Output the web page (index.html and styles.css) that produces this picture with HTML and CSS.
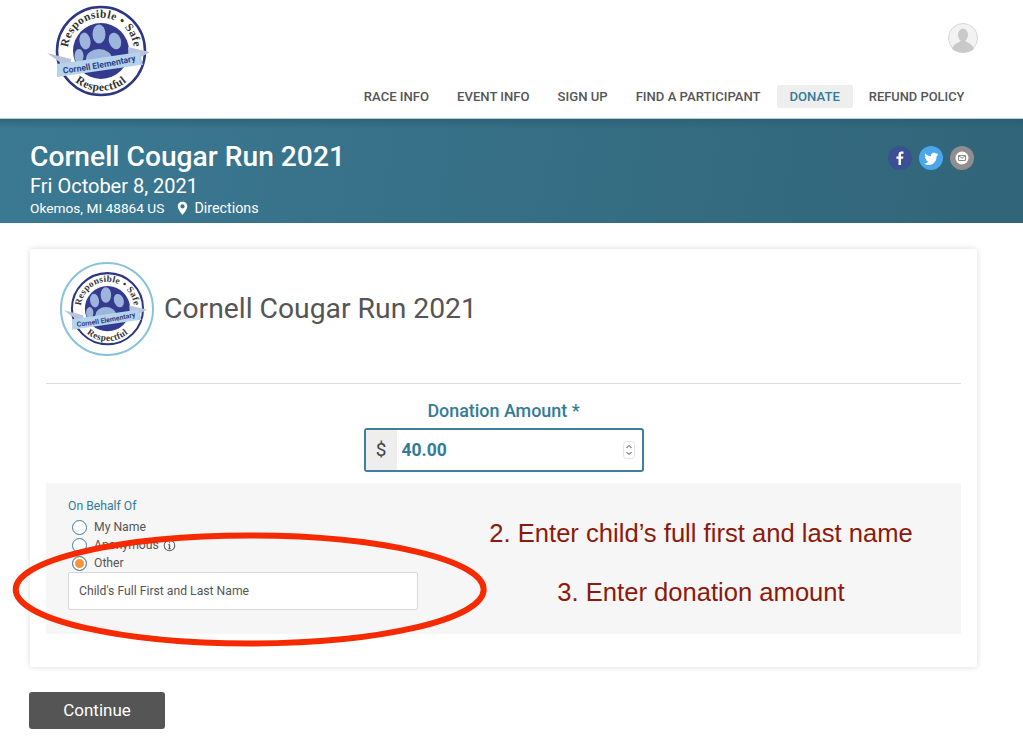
FILE: index.html
```html
<!DOCTYPE html>
<html lang="en">
<head>
    <meta charset="UTF-8">
    <meta name="viewport" content="width=device-width, initial-scale=1.0">
    <title>Cornell Cougar Run 2021</title>
    <link rel="stylesheet" href="styles.css">
</head>
<body>

    <!-- Logo, used in the header and in the card -->
    <svg class="defs" width="0" height="0">
        <defs>
            <path id="arc-top" d="M29 65 A33 33 0 1 1 91 65"/>
            <path id="arc-bottom" d="M26 75 A40 40 0 0 0 94 75"/>
            <path id="arc-band" d="M18 77 Q60 72 99 63"/>
            <g id="seal">
                <circle cx="60" cy="54" r="44" fill="#fff" stroke="#2e3582" stroke-width="2.500"/>
                <circle cx="60" cy="54" r="28" fill="#343b8e"/>
                <ellipse cx="58" cy="37" rx="6.500" ry="9.500" fill="#9db4dc"/>
                <ellipse cx="44" cy="44" rx="5.500" ry="8.500" fill="#9db4dc" transform="rotate(-10 44 44)"/>
                <ellipse cx="74" cy="44" rx="6" ry="8.500" fill="#9db4dc" transform="rotate(-18 74 44)"/>
                <ellipse cx="38" cy="59" rx="4.500" ry="7" fill="#9db4dc"/>
                <ellipse cx="58" cy="62" rx="13" ry="10" fill="#9db4dc"/>
                <text class="seal-text"><textPath href="#arc-top" startOffset="50%" text-anchor="middle">Responsible • Safe</textPath></text>
                <text class="seal-text"><textPath href="#arc-bottom" startOffset="50%" text-anchor="middle">Respectful</textPath></text>
                <polygon points="6,56 30,62 30,76 16,74 20,66" fill="#b9c3dc"/>
                <polygon points="87,50 109,55 100,60 102,68 88,68" fill="#b9c3dc"/>
                <polygon points="16,67 99,55 99,68 16,80" fill="#b5d3ea"/>
                <text class="band-text"><textPath href="#arc-band" startOffset="50%" text-anchor="middle">Cornell Elementary</textPath></text>
            </g>
        </defs>
    </svg>

    <div class="header">
        <svg class="logo" viewBox="0 0 120 110"><use href="#seal"/></svg>
        <div class="header-right">
            <div class="avatar">
                <svg viewBox="0 0 30 30" width="30" height="30">
                    <circle cx="15" cy="15" r="14.500" fill="#f2f2f2" stroke="#d6d6d6" stroke-width="1"/>
                    <ellipse cx="15" cy="12" rx="5" ry="6.500" fill="#c9c9c9"/>
                    <path d="M4 26 C6 20 11 20 12.500 18 L17.500 18 C19 20 24 20 26 26 C20 31 10 31 4 26 Z" fill="#c9c9c9"/>
                </svg>
            </div>
            <div class="nav">
                <a>RACE INFO</a>
                <a>EVENT INFO</a>
                <a>SIGN UP</a>
                <a>FIND A PARTICIPANT</a>
                <a class="active">DONATE</a>
                <a>REFUND POLICY</a>
            </div>
        </div>
    </div>

    <div class="band">
        <div>
            <h1>Cornell Cougar Run 2021</h1>
            <div class="band-date">Fri October 8, 2021</div>
            <div class="band-place">
                <span>Okemos, MI 48864 US</span>
                <svg viewBox="0 0 12 16" width="11" height="15">
                    <path fill="#fff" fill-rule="evenodd" d="M6 0.500 C2.900 0.500 0.800 2.800 0.800 5.600 C0.800 9 4.400 13 6 15 C7.600 13 11.200 9 11.200 5.600 C11.200 2.800 9.100 0.500 6 0.500 Z M6 3.400 A2.300 2.300 0 1 1 6 8 A2.300 2.300 0 1 1 6 3.400 Z"/>
                </svg>
                <span class="directions">Directions</span>
            </div>
        </div>
        <div class="share">
            <span class="share-btn fb">
                <svg viewBox="0 0 24 24" width="24" height="24"><path fill="#fff" d="M13 19v-6.200h2l.4-2.400H13V9c0-.7.2-1.200 1.200-1.200h1.300V5.600c-.3 0-1-.1-1.900-.1-1.900 0-3.100 1.100-3.100 3.200v1.700H8.400v2.400h2.100V19z"/></svg>
            </span>
            <span class="share-btn tw">
                <svg viewBox="0 0 24 24" width="24" height="24"><path fill="#fff" d="M19 8c-.5.2-1 .4-1.600.4.600-.3 1-.9 1.200-1.500-.5.3-1.100.6-1.800.7a2.800 2.800 0 0 0-4.800 2.600C9.700 10.100 7.600 9 6.200 7.300c-.8 1.300-.4 3 .9 3.800-.5 0-.9-.1-1.300-.4 0 1.400 1 2.500 2.300 2.800-.4.100-.8.100-1.300 0 .4 1.100 1.400 1.900 2.600 2A5.700 5.700 0 0 1 5.200 17.700a8 8 0 0 0 12.300-7.100c.6-.6 1.100-1.100 1.500-2.600z"/></svg>
            </span>
            <span class="share-btn mail">
                <svg viewBox="0 0 24 24" width="24" height="24">
                    <circle cx="12" cy="12" r="6.500" fill="#fff"/>
                    <path fill="none" stroke="#8a8a8a" stroke-width="1" d="M8.500 9.500h7v5h-7z M8.500 9.500l3.500 2.800 3.500-2.800"/>
                </svg>
            </span>
        </div>
    </div>

    <div class="content">
        <div class="card">
            <div class="card-head">
                <div class="card-logo">
                    <svg viewBox="0 0 120 110" width="97" height="89"><use href="#seal"/></svg>
                </div>
                <h2>Cornell Cougar Run 2021</h2>
            </div>

            <div class="amount">
                <label>Donation Amount *</label>
                <div class="amount-box">
                    <span class="amount-sign">$</span>
                    <span class="amount-value">40.00</span>
                    <span class="spinner">
                        <svg viewBox="0 0 12 18" width="12" height="18">
                            <rect x="0.500" y="0.500" width="11" height="17" rx="3" fill="#fff" stroke="#e4e4e4"/>
                            <path fill="none" stroke="#444" d="M3.500 7l2.500-2.500L8.500 7M3.500 11l2.500 2.500L8.500 11"/>
                        </svg>
                    </span>
                </div>
            </div>

            <div class="behalf">
                <div class="behalf-form">
                    <div class="behalf-title">On Behalf Of</div>
                    <div class="radio"><span class="dot"></span>My Name</div>
                    <div class="radio"><span class="dot"></span>Anonymous
                        <svg viewBox="0 0 14 14" width="13" height="13">
                            <circle cx="7" cy="7" r="5.700" fill="none" stroke="#555" stroke-width="1.100"/>
                            <path fill="none" stroke="#555" stroke-width="1.300" d="M7 6v4.200M5.800 6H7M5.800 10.300h2.400M7 3.400v1.300"/>
                        </svg>
                    </div>
                    <div class="radio"><span class="dot checked"></span>Other</div>
                    <div class="name-input">Child's Full First and Last Name</div>
                </div>
                <div class="notes">
                    <p>2. Enter child’s full first and last name</p>
                    <p>3. Enter donation amount</p>
                </div>
            </div>
        </div>

        <div class="continue">Continue</div>
    </div>

    <!-- Red marker ellipse drawn over the form -->
    <svg class="marker" viewBox="0 0 480 120" width="480" height="120">
        <ellipse cx="239.700" cy="57.500" rx="234" ry="54" fill="none" stroke="#f62a00" stroke-width="6"/>
    </svg>

</body>
</html>
```

FILE: styles.css
```css
body {
    font-family: Roboto, sans-serif;
    background-color: #fff;
    margin: 0;
    padding: 0;
    color: #555;
    position: relative;
    height: 741px;
    overflow: hidden;
}

.defs {
    position: absolute;
}

.seal-text {
    font-family: "Liberation Serif", serif;
    font-size: 11.5px;
    font-weight: 700;
    letter-spacing: 0.4px;
    fill: #333;
}

.band-text {
    font-family: Roboto, sans-serif;
    font-size: 8.6px;
    font-weight: 700;
    fill: #2e3f8c;
}

.header {
    height: 119px;
    display: flex;
    justify-content: space-between;
    padding: 0 44px 0 41px;
    box-sizing: border-box;
    border-bottom: 1px solid #b9cdd6;
}

.logo {
    width: 120px;
    height: 110px;
    margin-top: -3px;
}

.header-right {
    display: flex;
    flex-direction: column;
    align-items: flex-end;
}

.avatar {
    height: 30px;
    margin-top: 23px;
    margin-right: 1px;
}

.nav {
    display: flex;
    margin-top: 32px;
}

.nav a {
    font-size: 13.1px;
    font-weight: 500;
    line-height: 23px;
    padding: 0 14px;
    color: #555;
    border-radius: 2px;
    white-space: nowrap;
}

.nav a:last-child {
    font-size: 12.9px;
    padding-right: 14.5px;
}

.nav a.active {
    background-color: #eee;
    color: #337c99;
    padding: 0 13px;
    margin: 0 2px;
}

.band {
    height: 104px;
    box-sizing: border-box;
    padding: 22px 49px 0 30px;
    display: flex;
    justify-content: space-between;
    color: #fff;
    background: linear-gradient(180deg, rgba(40, 90, 110, 0.6), rgba(40, 90, 110, 0) 10px), linear-gradient(100deg, #3b7993, #316579);
}

.band h1 {
    margin: 0;
    font-size: 28.2px;
    font-weight: 500;
    line-height: 31px;
}

.band-date {
    font-size: 20px;
    line-height: 28px;
}

.band-place {
    font-size: 13.7px;
    line-height: 17px;
    display: flex;
    align-items: center;
    gap: 4px;
}

.band-place svg {
    margin-left: 9px;
}

.directions {
    font-size: 14.3px;
    margin-left: 2px;
}

.share {
    display: flex;
    gap: 7px;
    margin-top: 5px;
}

.share-btn {
    width: 24px;
    height: 24px;
    border-radius: 50%;
}

.share-btn.fb {
    background-color: #3b4f94;
}

.share-btn.tw {
    background-color: #4aa7ea;
}

.share-btn.mail {
    background-color: #8f8f8f;
}

.content {
    padding: 26px 46px 0 30px;
}

.card {
    width: 947px;
    height: 418px;
    box-sizing: border-box;
    background-color: #fff;
    box-shadow: 0 0 6px rgba(0, 0, 0, 0.15);
    border-radius: 2px;
    padding: 0 16px;
}

.card-head {
    height: 135px;
    box-sizing: border-box;
    border-bottom: 1px solid #ddd;
    display: flex;
    align-items: flex-start;
    padding: 13px 0 0 14px;
}

.card-logo {
    width: 94px;
    height: 94px;
    flex: none;
    box-sizing: border-box;
    border-radius: 50%;
    border: 2px solid #88c3dc;
    display: flex;
    align-items: center;
    justify-content: center;
}

.card-logo svg {
    flex: none;
}

.card-head h2 {
    margin: 30px 0 0 10px;
    font-size: 28.3px;
    font-weight: 400;
    line-height: 34px;
    color: #555;
}

.amount {
    display: flex;
    flex-direction: column;
    align-items: center;
    padding-top: 17px;
}

.amount label {
    font-size: 17.9px;
    font-weight: 500;
    line-height: 20px;
    color: #337c99;
}

.amount-box {
    width: 280px;
    height: 44px;
    margin-top: 7px;
    box-sizing: border-box;
    border: 2px solid #3f7f9a;
    border-radius: 3px;
    display: flex;
    align-items: center;
}

.amount-sign {
    width: 31px;
    height: 100%;
    background-color: #eee;
    font-size: 19px;
    line-height: 40px;
    text-align: center;
    color: #444;
}

.amount-value {
    flex: 1;
    padding-left: 5px;
    font-size: 17.5px;
    font-weight: 700;
    color: #337c99;
}

.spinner {
    height: 18px;
    margin-right: 7px;
}

.behalf {
    margin-top: 11px;
    height: 151px;
    background-color: #f6f6f6;
    display: flex;
}

.behalf-form {
    width: 350px;
    margin-left: 22px;
    padding-top: 16px;
}

.behalf-title {
    font-size: 12.2px;
    line-height: 15px;
    color: #337c99;
    margin-bottom: 4px;
}

.radio {
    font-size: 12.2px;
    line-height: 18px;
    display: flex;
    align-items: center;
    padding-left: 4px;
}

.radio svg {
    margin-left: 4px;
}

.dot {
    width: 15px;
    height: 15px;
    box-sizing: border-box;
    border: 1px solid #3f7f9a;
    border-radius: 50%;
    background-color: #fff;
    margin-right: 7px;
}

.dot.checked {
    background-color: #f7933a;
    box-shadow: inset 0 0 0 2px #fff;
}

.name-input {
    height: 38px;
    box-sizing: border-box;
    background-color: #fff;
    border: 1px solid #d8d8d8;
    border-radius: 2px;
    font-size: 12.2px;
    line-height: 36px;
    padding-left: 10px;
}

.notes {
    flex: 1;
    padding-top: 36px;
    padding-left: 23px;
    font-family: "Liberation Sans", sans-serif;
    font-size: 25.6px;
    color: #8c1a0c;
    text-align: center;
}

.notes p {
    margin: 0 0 31px;
    line-height: 28px;
}

.continue {
    width: 136px;
    height: 37px;
    margin-top: 25px;
    margin-left: -1px;
    background-color: #555;
    color: #fff;
    border-radius: 3px;
    font-size: 17px;
    line-height: 37px;
    text-align: center;
}

.marker {
    position: absolute;
    left: 10px;
    top: 532px;
}
```
